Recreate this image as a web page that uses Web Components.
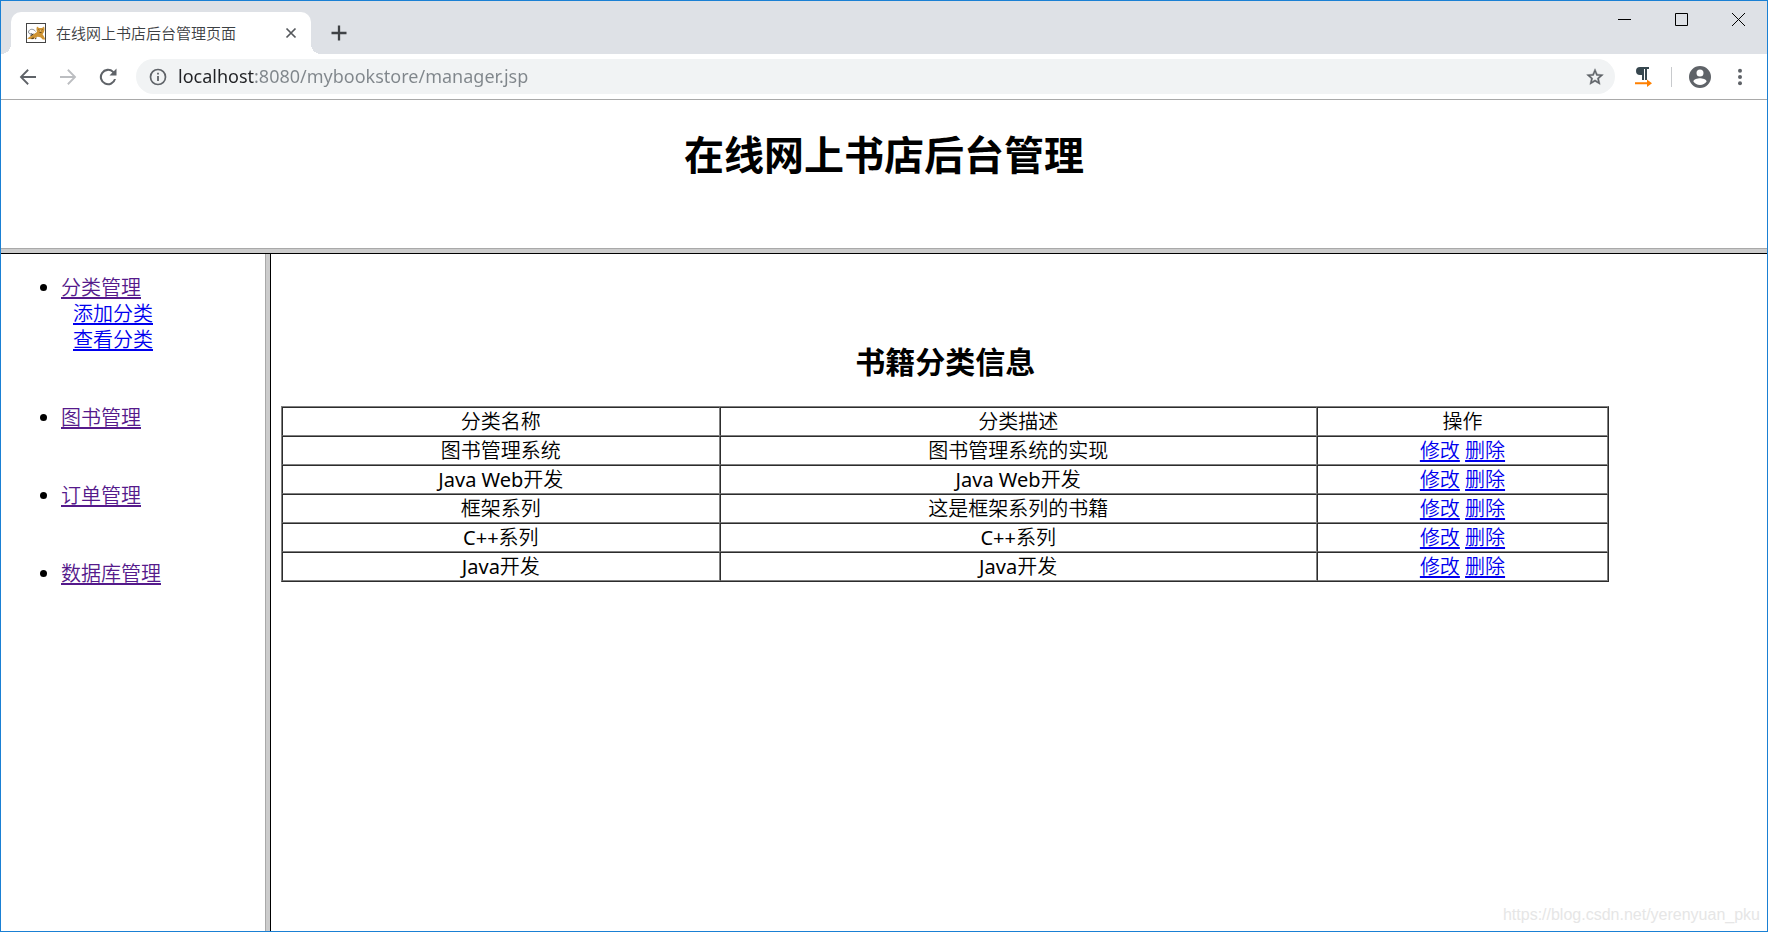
<!DOCTYPE html>
<html lang="zh-CN">
<head>
<meta charset="utf-8">
<title>在线网上书店后台管理页面</title>
<style>
html, body { margin: 0; height: 100%; }
body { font-family: "Noto Sans", "Noto Sans CJK SC DemiLight", "Noto Sans CJK SC", sans-serif; font-size: 20px; color: #000; background: #fff; }
</style>
</head>
<body>
<browser-window>
  <tab-strip slot="tabs" label="在线网上书店后台管理页面"></tab-strip>
  <tool-bar slot="toolbar" host="localhost" path=":8080/mybookstore/manager.jsp"></tool-bar>
  <page-frameset>
    <page-banner slot="top">在线网上书店后台管理</page-banner>
    <side-menu slot="left"></side-menu>
    <category-table slot="main"></category-table>
  </page-frameset>
</browser-window>
<water-mark>https://blog.csdn.net/yerenyuan_pku</water-mark>

<script>
function define(name, html, setup) {
  customElements.define(name, class extends HTMLElement {
    constructor() {
      super();
      this.attachShadow({ mode: "open" }).innerHTML = html;
    }
    connectedCallback() {
      if (setup) setup(this, this.shadowRoot);
    }
  });
}

define("icon-button", `
<style>
:host { display: block; }
button { display: flex; align-items: center; justify-content: center; width: 100%; height: 100%; padding: 0; margin: 0; border: 0; background: none; color: inherit; }
</style>
<button type="button"><slot></slot></button>`, (el, root) => {
  root.querySelector("button").setAttribute("aria-label", el.getAttribute("label"));
});

define("browser-window", `
<style>
:host { display: flex; flex-direction: column; box-sizing: border-box; min-height: 100vh; border: 1px solid #1a80d4; background: #fff; }
::slotted(page-frameset) { flex: 1; }
</style>
<slot name="tabs"></slot><slot name="toolbar"></slot><slot></slot>`);

define("tab-strip", `
<style>
:host { display: flex; height: 53px; background: #dee1e6; color: #3c4043; }
.tab { position: relative; display: flex; align-items: center; align-self: flex-end; box-sizing: border-box; width: 300px; height: 42px; margin-left: 10px; padding: 0 9px 0 15px; border-radius: 10px 10px 0 0; background: #fff; }
.tab::before, .tab::after { content: ""; position: absolute; bottom: 0; width: 10px; height: 10px; }
.tab::before { right: 100%; background: radial-gradient(circle at 0 0, transparent 10px, #fff 10px); }
.tab::after { left: 100%; background: radial-gradient(circle at 100% 0, transparent 10px, #fff 10px); }
.title { flex: 1; margin-left: 10px; font-size: 15px; line-height: 20px; white-space: nowrap; }
.close { width: 22px; height: 22px; }
.new { width: 36px; height: 42px; align-self: flex-end; margin-left: 10px; }
.controls { display: flex; margin-left: auto; color: #000; }
.controls icon-button { width: 57px; height: 36px; }
svg { display: block; }
</style>
<div class="tab">
  <svg width="20" height="20" viewBox="0 0 20 20">
    <rect x=".5" y=".5" width="19" height="19" fill="#fff" stroke="#444"/>
    <path d="M9.500 8.500C8 5.500 3 5.500 2.500 9c0 2 2.500 2.500 3.500 1.200M4 12.500l3-1.500" fill="none" stroke="#85898d"/>
    <path d="M1.200 15.800C3.500 13.500 6 12.500 8 11c1.500-1 2.500-1.500 3-2.500C10.200 7 10.500 5 11 3.500l2 1.600h3l2-1.600c.8 2 .7 4.300-.3 5.900L16.500 11.200c1 1.300 2 2.800 2.700 5.200h-2.500c-1.500-2-3-2.700-5-2.700-2 .5-3 2-5 2.500z" fill="#cf9433"/>
    <path d="M12.500 6.500l1 .8M16.500 6.500l-1 .8M13.500 9.500h2" stroke="#5c4720" stroke-width=".9"/>
    <path d="M13.500 7.500h2l-1 1z" fill="#f8e6b8"/>
    <path d="M5 12.500l2.500-1.500M5.500 15.500l2.500-.5M9 16l1.500-1" fill="none" stroke="#3b3022"/>
  </svg>
  <span class="title"></span>
  <icon-button class="close" label="关闭标签页"><svg width="12" height="12" viewBox="0 0 12 12"><path d="M1.500 1.500l9 9M10.500 1.500l-9 9" stroke="#55585c" stroke-width="1.700"/></svg></icon-button>
</div>
<icon-button class="new" label="打开新的标签页"><svg width="16" height="16" viewBox="0 0 16 16"><path d="M8 .500v15M.500 8h15" stroke="#3f4246" stroke-width="2.300"/></svg></icon-button>
<div class="controls">
  <icon-button label="最小化"><svg width="13" height="13" viewBox="0 0 13 13"><path d="M0 6.500h13" stroke="#000"/></svg></icon-button>
  <icon-button label="最大化"><svg width="13" height="13" viewBox="0 0 13 13"><path d="M.5.5h12v12H.5z" fill="none" stroke="#000"/></svg></icon-button>
  <icon-button label="关闭"><svg width="13" height="13" viewBox="0 0 13 13"><path d="M0 0l13 13M13 0L0 13" stroke="#000"/></svg></icon-button>
</div>`, (el, root) => {
  root.querySelector(".title").textContent = el.getAttribute("label");
});

define("tool-bar", `
<style>
:host { display: flex; align-items: center; box-sizing: border-box; height: 46px; padding: 0 7px; border-bottom: 1px solid #a9a9a9; color: #5f6368; }
svg { display: block; fill: currentColor; }
icon-button { width: 40px; height: 40px; }
.off { color: #bcbec1; }
.pill { flex: 1; display: flex; align-items: center; height: 35px; margin: 0 8px; border-radius: 18px; background: #f1f3f4; }
.info { margin-left: 2px; }
.url { flex: 1; min-width: 0; padding: 0 0 2px; border: 0; outline: 0; font-family: "Noto Sans", "Noto Sans CJK SC", sans-serif; font-size: 18px; line-height: 24px; height: 24px; color: #80868b; -webkit-text-fill-color: transparent; background: linear-gradient(90deg, #202124 76px, #80868b 76px); -webkit-background-clip: text; background-clip: text; }
.rule { width: 1px; height: 20px; margin: 0 8px; background: #c8cacd; }
</style>
<icon-button label="后退"><svg width="20" height="20" viewBox="0 0 20 20"><path d="M18 9H5.300l5.500-5.500L9.500 2 1.700 10l7.800 8 1.300-1.500L5.300 11H18z"/></svg></icon-button>
<icon-button class="off" label="前进"><svg width="20" height="20" viewBox="0 0 20 20"><path d="M2 9h12.700L9.200 3.500 10.500 2l7.800 8-7.800 8-1.300-1.500L14.700 11H2z"/></svg></icon-button>
<icon-button label="重新加载"><svg width="20" height="20" viewBox="0 0 20 20"><path d="M18.500 1.500v7h-7l2.900-2.900A6.200 6.200 0 1 0 16 12h2A8.200 8.200 0 1 1 15.800 4.200z"/></svg></icon-button>
<div class="pill">
  <icon-button class="info" label="查看网站信息"><svg width="18" height="18" viewBox="0 0 18 18"><circle cx="9" cy="9" r="7.500" fill="none" stroke="currentColor" stroke-width="1.700"/><path d="M8.100 8h1.800v5H8.100zM8.100 4.800h1.800v1.800H8.100z"/></svg></icon-button>
  <input class="url" type="text" aria-label="地址和搜索栏" spellcheck="false">
  <icon-button label="为此网页添加书签"><svg width="20" height="20" viewBox="0 0 24 24"><path d="M22 9.240l-7.190-.62L12 2 9.190 8.630 2 9.240l5.460 4.730L5.820 21 12 17.270 18.180 21l-1.630-7.030L22 9.240zM12 15.400l-3.760 2.270 1-4.280-3.320-2.880 4.380-.38L12 6.100l1.710 4.040 4.380.38-3.320 2.880 1 4.280L12 15.400z" stroke="currentColor" stroke-width=".5"/></svg></icon-button>
</div>
<icon-button label="扩展程序"><svg width="20" height="20" viewBox="0 0 20 20"><path d="M7 0h9v2h-2v11h-2V2h-1v11H9V8H7a4 4 0 0 1 0-8z" fill="#37474f"/><path d="M2 15.200h12V12.500l5 3.700L14 20v-2.700H2z" fill="#ff8000"/></svg></icon-button>
<span class="rule"></span>
<icon-button label="用户"><svg width="22" height="22" viewBox="0 0 22 22"><path fill-rule="evenodd" d="M11 0a11 11 0 1 0 0 22 11 11 0 0 0 0-22zm0 3.500a3.500 3.500 0 1 1 0 7 3.500 3.500 0 0 1 0-7zM11 19a8 8 0 0 1-6.600-3.500c0-2.200 4.400-3.300 6.600-3.300s6.600 1.100 6.600 3.300A8 8 0 0 1 11 19z"/></svg></icon-button>
<icon-button label="更多"><svg width="20" height="20" viewBox="0 0 20 20"><circle cx="10" cy="3.700" r="2"/><circle cx="10" cy="10" r="2"/><circle cx="10" cy="16.300" r="2"/></svg></icon-button>`, (el, root) => {
  root.querySelector(".url").value = el.getAttribute("host") + el.getAttribute("path");
});

define("page-frameset", `
<style>
:host { display: flex; flex-direction: column; }
.row { box-sizing: border-box; height: 6px; border-top: 1px solid #a9a9a9; border-bottom: 1px solid #000; background: #ccc; }
.cols { flex: 1; display: grid; grid-template-columns: 3fr 6px 17fr; }
.col { border-left: 1px solid #a9a9a9; border-right: 1px solid #000; background: #ccc; }
</style>
<slot name="top"></slot>
<div class="row"></div>
<div class="cols"><slot name="left"></slot><div class="col"></div><slot name="main"></slot></div>`);

define("page-banner", `
<style>
:host { display: block; padding: 28px 10px 66px; }
h1 { margin: 0; font-family: "Noto Sans", "Noto Sans CJK SC", sans-serif; font-size: 40px; line-height: 54px; font-weight: 700; text-align: center; }
</style>
<h1><slot></slot></h1>`);

define("side-menu", `
<style>
:host { display: block; padding: 21px 10px; line-height: 26px; }
ul { margin: 0; padding-left: 50px; }
li { margin-bottom: 52px; }
div { padding-left: 12px; }
a { color: #00e; text-decoration-thickness: 2px; text-underline-offset: 2px; text-decoration-skip-ink: none; }
.seen { color: #551a8b; }
</style>
<nav><ul>
  <li><a class="seen" href="#category">分类管理</a>
    <div><a href="#add">添加分类</a></div>
    <div><a href="#list">查看分类</a></div></li>
  <li><a class="seen" href="#books">图书管理</a></li>
  <li><a class="seen" href="#orders">订单管理</a></li>
  <li><a class="seen" href="#database">数据库管理</a></li>
</ul></nav>`);

const CATEGORIES = [
  ["图书管理系统", "图书管理系统的实现"],
  ["Java Web开发", "Java Web开发"],
  ["框架系列", "这是框架系列的书籍"],
  ["C++系列", "C++系列"],
  ["Java开发", "Java开发"]
];

define("category-table", `
<style>
:host { display: block; padding: 88px 10px 10px; }
section { width: 90%; }
h2 { margin: 0 0 24px; font-family: "Noto Sans", "Noto Sans CJK SC", sans-serif; font-size: 30px; line-height: 40px; font-weight: 700; text-align: center; }
table { width: 100%; table-layout: fixed; border-collapse: separate; border-spacing: 0; border: 1px solid; border-color: #808080 #2c2c2c #2c2c2c #808080; text-align: center; }
th, td { height: 27px; padding: 0; border: 1px solid; border-color: #2c2c2c #808080 #808080 #2c2c2c; font-weight: 400; line-height: 27px; }
.name { width: 33%; }
.text { width: 45%; }
.action { width: 22%; }
a { color: #00e; text-decoration-thickness: 2px; text-underline-offset: 2px; text-decoration-skip-ink: none; }
</style>
<section>
<h2>书籍分类信息</h2>
<table>
  <colgroup><col class="name"><col class="text"><col class="action"></colgroup>
  <thead><tr><th scope="col">分类名称</th><th scope="col">分类描述</th><th scope="col">操作</th></tr></thead>
  <tbody>${CATEGORIES.map(([name, text]) => `<tr><td>${name}</td><td>${text}</td><td><a href="#edit">修改</a> <a href="#delete">删除</a></td></tr>`).join("")}</tbody>
</table>
</section>`);

define("water-mark", `
<style>
:host { position: absolute; right: 8px; bottom: 7px; font-family: "Liberation Sans", Arial, sans-serif; font-size: 16px; line-height: 20px; color: #e6e6e6; }
</style>
<slot></slot>`);
</script>
</body>
</html>
